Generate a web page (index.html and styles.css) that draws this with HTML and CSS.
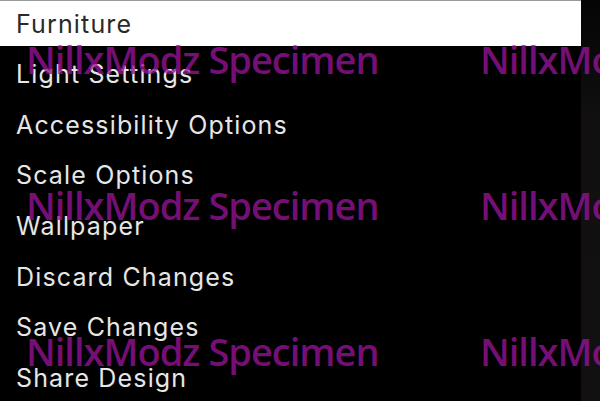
FILE: index.html
```html
<!DOCTYPE html>
<html lang="en">
<head>
    <meta charset="UTF-8">
    <title>Interior Menu</title>
    <link rel="stylesheet" href="styles.css">
</head>
<body>
    <div class="screen">
        <ul class="menu">
            <li class="item active">Furniture</li>
            <li class="item">Light Settings</li>
            <li class="item">Accessibility Options</li>
            <li class="item">Scale Options</li>
            <li class="item">Wallpaper</li>
            <li class="item">Discard Changes</li>
            <li class="item">Save Changes</li>
            <li class="item">Share Design</li>
        </ul>
        <div class="edge"></div>

        <!-- watermark overlay -->
        <div class="marks">
            <span>NillxModz Specimen</span><span>NillxModz Specimen</span>
            <span>NillxModz Specimen</span><span>NillxModz Specimen</span>
            <span>NillxModz Specimen</span><span>NillxModz Specimen</span>
        </div>
    </div>
</body>
</html>
```

FILE: styles.css
```css
html, body {
    margin: 0;
    padding: 0;
    background: #000;
}
.screen {
    position: relative;
    display: flex;
    width: 600px;
    height: 401px;
    overflow: hidden;
}
.menu {
    list-style: none;
    margin: 0;
    padding: 0;
    width: 581px;
    border-top: 1px solid #9a9a9a;
}
.item {
    height: 50.6px;
    display: flex;
    align-items: center;
    padding-left: 16px;
    font-family: Inter, "Liberation Sans", sans-serif;
    font-size: 25px;
    letter-spacing: 1.15px;
    color: #e6e6e6;
}
.item.active {
    height: 45px;
    margin-bottom: 3px;
    background: #fff;
    color: #2a2a2a;
}
.edge {
    flex: 1;
    background: linear-gradient(#050505, #110f0f 30%, #121010);
}
.marks {
    position: absolute;
    top: 37px;
    left: 26px;
    display: grid;
    grid-template-columns: 454px 454px;
    row-gap: 102px;
    pointer-events: none;
}
.marks span {
    font-family: "Open Sans", "DejaVu Sans", sans-serif;
    font-weight: 600;
    font-size: 38px;
    letter-spacing: -1px;
    line-height: 44px;
    color: rgba(150, 20, 150, 0.78);
    white-space: nowrap;
}
```
